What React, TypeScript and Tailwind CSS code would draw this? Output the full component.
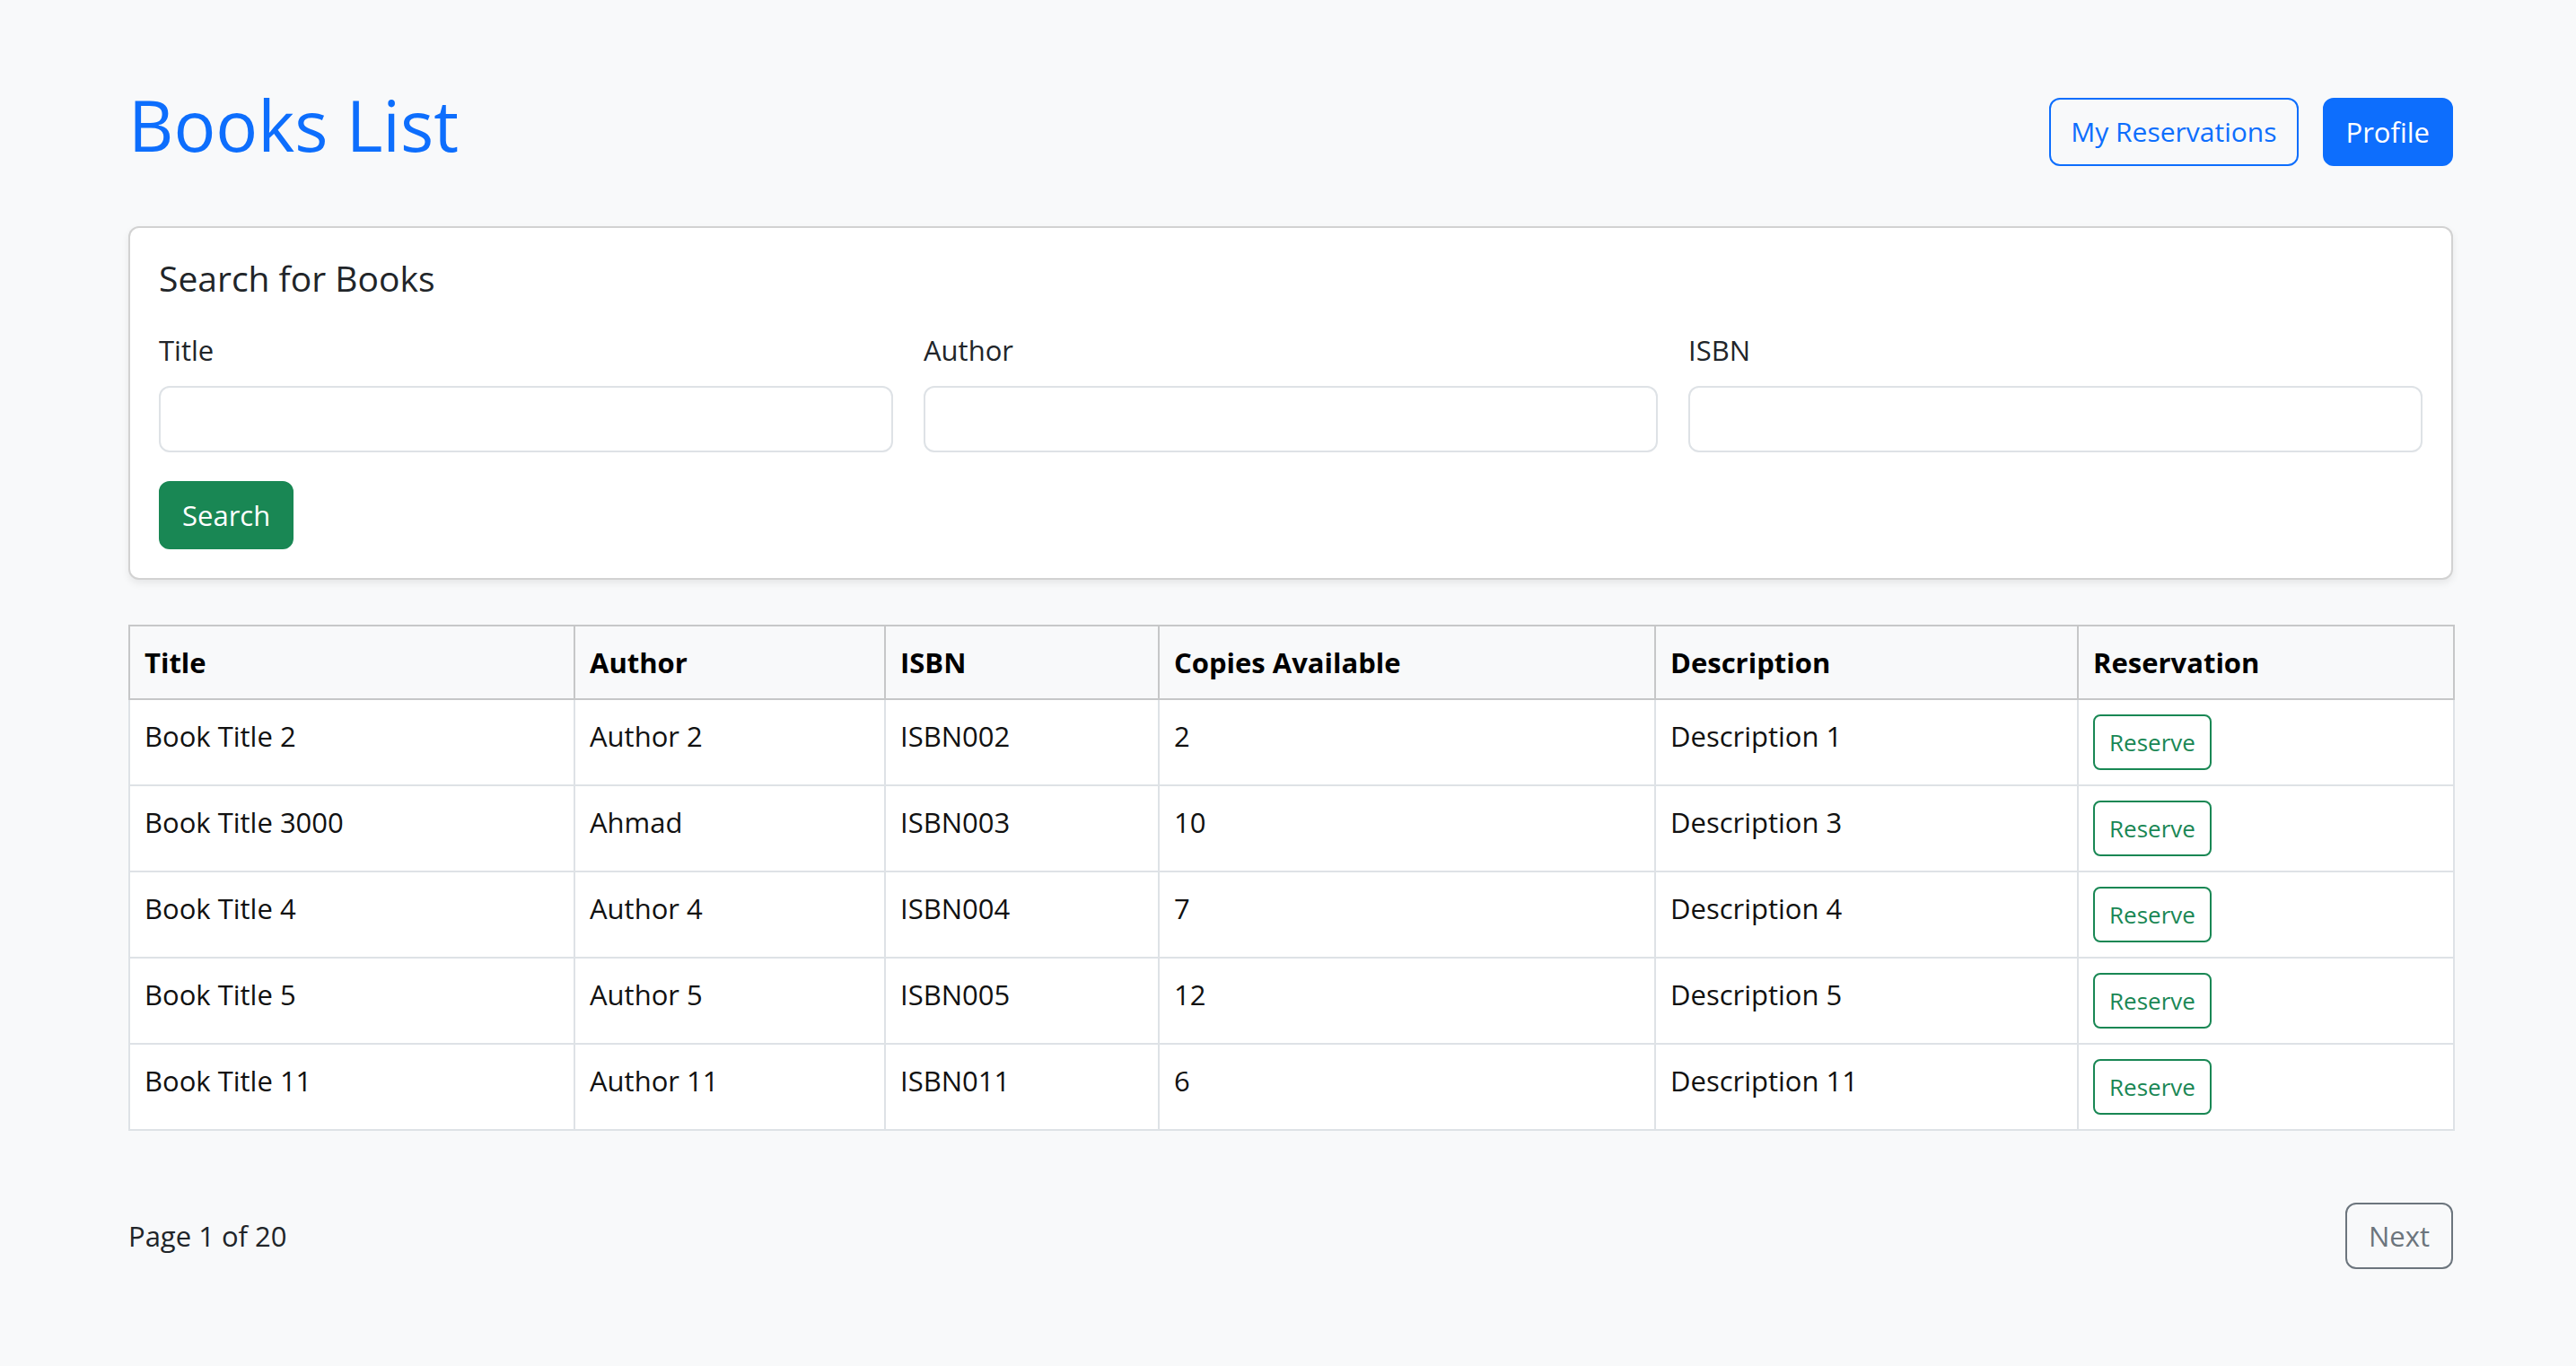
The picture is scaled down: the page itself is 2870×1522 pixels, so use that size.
import React from "react";

const books: string[][] = [
  ["Book Title 2", "Author 2", "ISBN002", "2", "Description 1"],
  ["Book Title 3000", "Ahmad", "ISBN003", "10", "Description 3"],
  ["Book Title 4", "Author 4", "ISBN004", "7", "Description 4"],
  ["Book Title 5", "Author 5", "ISBN005", "12", "Description 5"],
  ["Book Title 11", "Author 11", "ISBN011", "6", "Description 11"],
];

const headers = ["Title", "Author", "ISBN", "Copies Available", "Description", "Reservation"];
const widths = ["w-[496px]", "w-[346px]", "w-[305px]", "w-[553px]", "w-[471px]", "w-[419px]"];

export default function App() {
  return (
    <div className="min-h-screen bg-[#f8f9fa] text-[#212529] font-['Open_Sans',sans-serif] text-[31px] leading-[48px]">
      <div className="w-[2590px] ml-[143px] pt-[91px] pb-[80px]">
        <div className="flex items-center justify-between mb-[49px]">
          <h1 className="text-[78px] leading-[96px] font-medium text-[#0d6efd] mb-[16px]">Books List</h1>
          <div className="flex items-center gap-[27px]">
            <button className="h-[76px] px-[22px] border-2 border-[#0d6efd] text-[#0d6efd] rounded-[12px] bg-transparent text-[30px] leading-[48px]">
              My Reservations
            </button>
            <button className="h-[76px] px-[24px] border-2 border-[#0d6efd] bg-[#0d6efd] text-white rounded-[12px] text-[31px] leading-[48px]">
              Profile
            </button>
          </div>
        </div>

        <div className="bg-white border-2 border-[rgba(0,0,0,0.175)] rounded-[12px] shadow-[0_4px_8px_rgba(0,0,0,0.075)] p-[32px]">
          <h5 className="text-[39px] leading-[48px] font-medium mb-[32px]">Search for Books</h5>
          <div className="grid grid-cols-3 gap-x-[34px] mb-[32px]">
            {["Title", "Author", "ISBN"].map((l) => (
              <div key={l}>
                <label className="block mb-[16px]">{l}</label>
                <input className="block w-full h-[74px] border-2 border-[#dee2e6] rounded-[12px] bg-white px-[24px] outline-none" />
              </div>
            ))}
          </div>
          <button className="h-[76px] px-[24px] bg-[#198754] text-white rounded-[12px] border-2 border-[#198754] text-[31px] leading-[48px]">
            Search
          </button>
        </div>

        <table className="w-full table-fixed border-collapse mt-[50px] border-2 border-[#dee2e6]">
          <colgroup>
            {widths.map((w, i) => (
              <col key={i} className={w} />
            ))}
          </colgroup>
          <thead>
            <tr>
              {headers.map((h) => (
                <th
                  key={h}
                  className="bg-[#f8f9fa] text-black font-bold text-left align-top px-[16px] py-[16px] border-2 border-[#c6c7c8]"
                >
                  {h}
                </th>
              ))}
            </tr>
          </thead>
          <tbody>
            {books.map((b) => (
              <tr key={b[0]}>
                {b.map((c, i) => (
                  <td key={i} className="bg-white text-[#111] align-top px-[16px] py-[16px] border-2 border-[#dee2e6]">
                    {c}
                  </td>
                ))}
                <td className="bg-white align-top px-[16px] py-[16px] border-2 border-[#dee2e6]">
                  <button className="inline-flex items-center h-[62px] px-[16px] border-2 border-[#198754] text-[#198754] rounded-[8px] bg-transparent text-[26px] leading-[42px]">
                    Reserve
                  </button>
                </td>
              </tr>
            ))}
          </tbody>
        </table>

        <div className="flex items-center justify-between mt-[80px]">
          <span>Page 1 of 20</span>
          <button
            disabled
            className="h-[74px] px-[24px] border-2 border-[#6c757d] text-[#6c757d] rounded-[12px] bg-transparent text-[31px] leading-[48px]"
          >
            Next
          </button>
        </div>
      </div>
    </div>
  );
}
